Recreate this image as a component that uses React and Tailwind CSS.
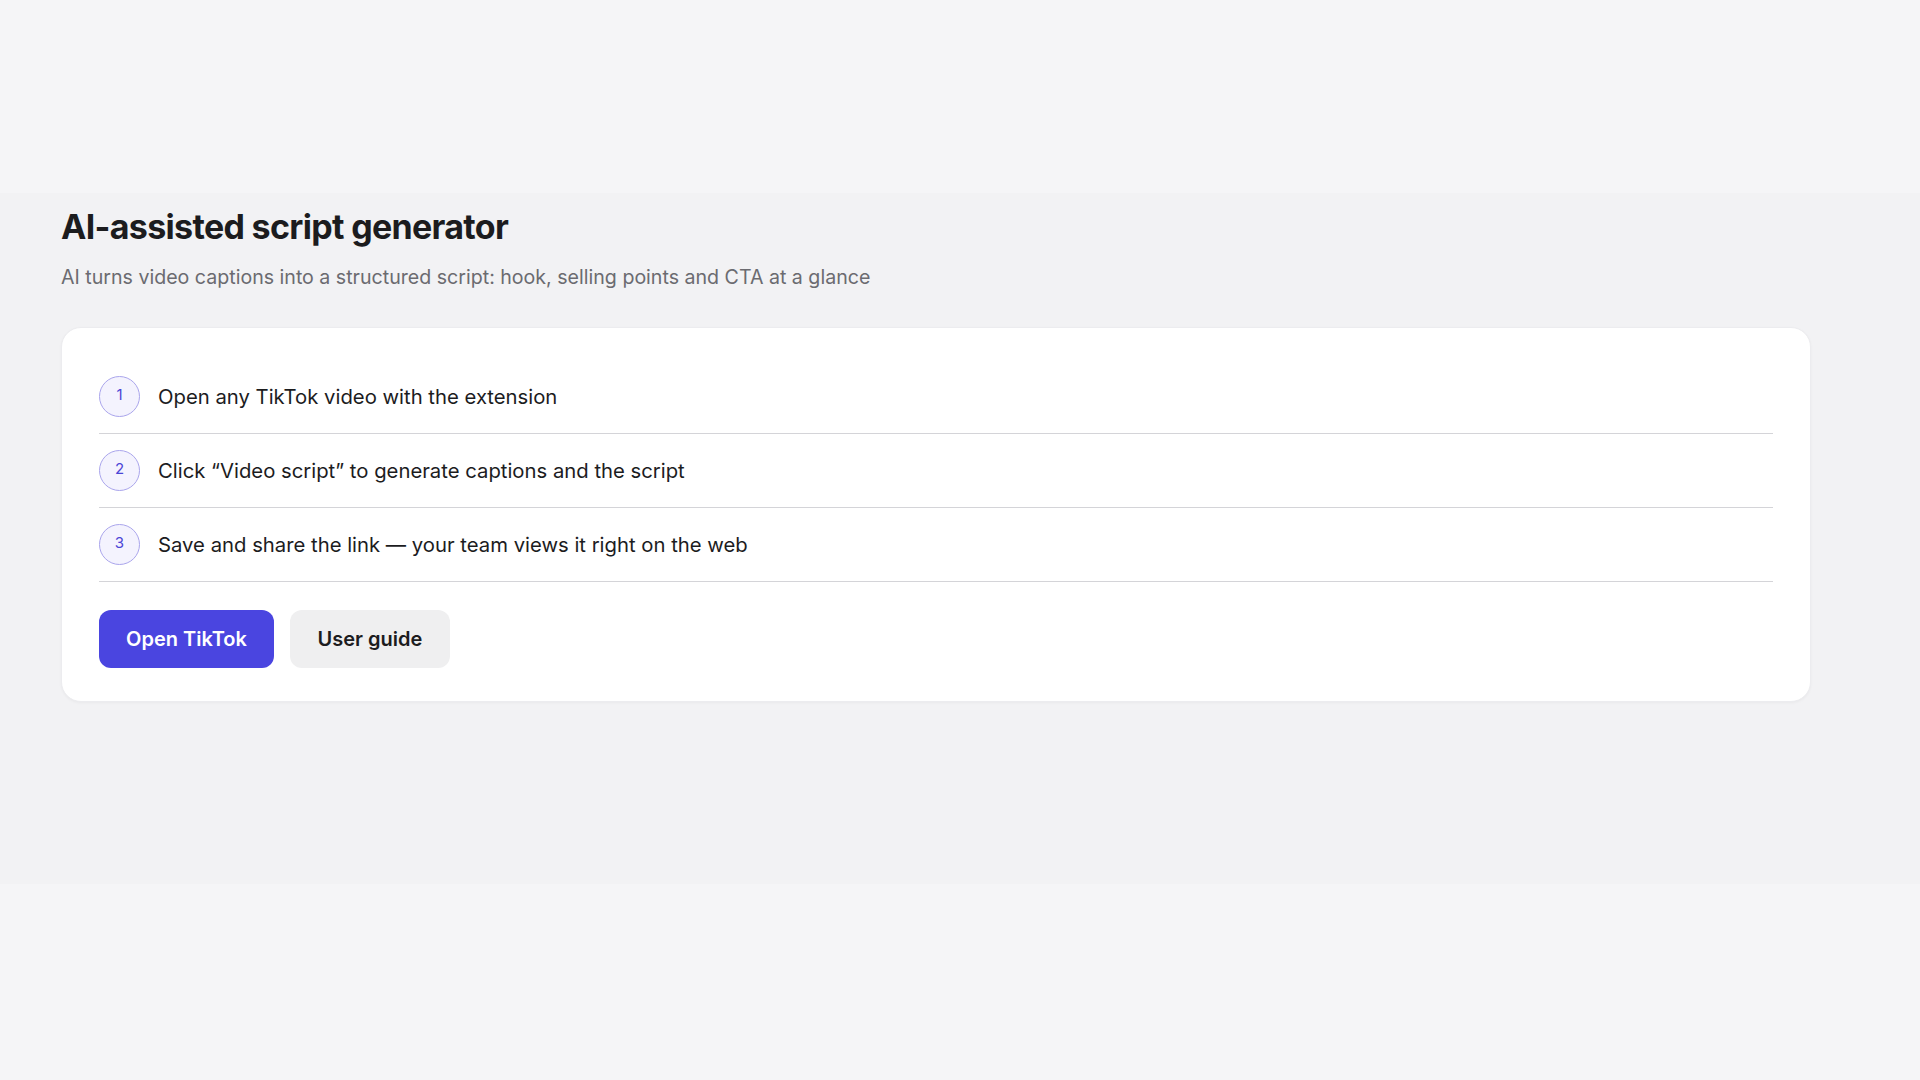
const steps = [
  "Open any TikTok video with the extension",
  "Click “Video script” to generate captions and the script",
  "Save and share the link — your team views it right on the web",
];

const StepRow = ({ index, text }) => (
  <li className="flex items-center gap-[18px] border-b-[1.5px] border-[#d4d4d8] py-4">
    <span className="flex h-[41px] w-[41px] shrink-0 items-center justify-center rounded-full border-[1.5px] border-[#aaa5ec] bg-[#f4f3fe] pb-[2px] text-[15px] text-[#4b45d6]">
      {index}
    </span>
    <span className="text-[20.3px] leading-[28px] text-[#1c1c1e]">{text}</span>
  </li>
);

const App = () => {
  return (
    <div
      className="min-h-[1080px] bg-[#f5f5f7]"
      style={{ fontFamily: "Inter, 'Noto Sans', 'Liberation Sans', sans-serif" }}
    >
      <div className="h-[193px]" />
      <section className="h-[691px] bg-[#f2f2f4] px-[61px] pt-[14px]">
        <h1 className="text-[34px] font-bold leading-[40px] tracking-[-0.02em] text-[#1c1c1e]">
          AI-assisted script generator
        </h1>
        <p className="mt-4 text-[19.6px] leading-[28px] text-[#6b6b70]">
          AI turns video captions into a structured script: hook, selling points and CTA at a glance
        </p>

        <div className="mt-[36px] w-[1750px] rounded-[20px] border border-[#ececef] bg-white px-[37px] pt-[32px] pb-[33px] shadow-[0_1px_3px_rgba(0,0,0,0.04)]">
          <ol>
            {steps.map((text, i) => (
              <StepRow key={i} index={i + 1} text={text} />
            ))}
          </ol>
          <div className="mt-[28px] flex gap-4">
            <button className="h-[58px] w-[175px] rounded-[12px] bg-[#4a45e0] text-[20px] font-semibold text-white">
              Open TikTok
            </button>
            <button className="h-[58px] w-[160px] rounded-[12px] bg-[#efeff0] text-[20px] font-semibold text-[#1c1c1e]">
              User guide
            </button>
          </div>
        </div>
      </section>
    </div>
  );
};

export default App;
